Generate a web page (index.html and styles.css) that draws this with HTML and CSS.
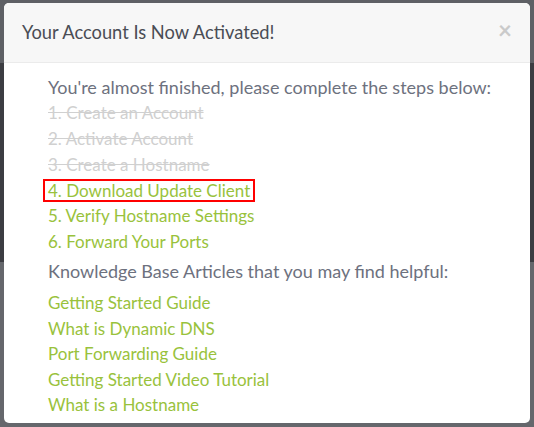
FILE: index.html
```html
<!DOCTYPE html>
<html>
<head>
<meta charset="utf-8">
<link rel="stylesheet" href="styles.css">
</head>
<body>
<div class="modal">
  <div class="modal-header">
    <h4 class="title">Your Account Is Now Activated!</h4>
    <span class="close">&times;</span>
  </div>
  <div class="modal-body">
    <p class="lead">You're almost finished, please complete the steps below:</p>
    <ul class="steps">
      <li class="done">1. Create an Account</li>
      <li class="done">2. Activate Account</li>
      <li class="done">3. Create a Hostname</li>
      <li class="cur"><a class="current">4. Download Update Client</a></li>
      <li><a>5. Verify Hostname Settings</a></li>
      <li><a>6. Forward Your Ports</a></li>
    </ul>
    <p class="lead kb">Knowledge Base Articles that you may find helpful:</p>
    <ul class="links">
      <li><a>Getting Started Guide</a></li>
      <li><a>What is Dynamic DNS</a></li>
      <li><a>Port Forwarding Guide</a></li>
      <li><a>Getting Started Video Tutorial</a></li>
      <li><a>What is a Hostname</a></li>
    </ul>
  </div>
</div>
</body>
</html>
```
FILE: styles.css
```css
html, body {
  margin: 0;
  padding: 0;
}
body {
  width: 534px;
  height: 427px;
  overflow: hidden;
  background: linear-gradient(to bottom, #5e6065 0, #5e6065 63px, #3c3d42 63px, #3c3d42 262px, #65676c 262px, #65676c 100%);
  font-family: Lato, "Open Sans", sans-serif;
  padding: 3px 4px 0 4px;
  box-sizing: border-box;
}
.modal {
  width: 526px;
  height: 420px;
  background: #fff;
  border-radius: 5px;
  overflow: hidden;
}
.modal-header {
  height: 59px;
  background: #f7f7f7;
  border-bottom: 1px solid #ebebeb;
  display: flex;
  align-items: center;
  justify-content: space-between;
  padding: 0 18px 0 18px;
}
.title {
  margin: 0;
  font-size: 18.3px;
  font-weight: 400;
  color: #4a4d55;
  padding-bottom: 2px;
}
.close {
  color: #cacaca;
  font-size: 24px;
  font-weight: 700;
  line-height: 1;
  margin-bottom: 6px;
}
.modal-body {
  padding: 11px 0 0 44px;
  font-size: 17px;
  line-height: 26px;
}
.lead {
  margin: 0;
  font-size: 18px;
  color: #6d717e;
}
ul {
  list-style: none;
  margin: 0;
  padding: 0;
}
.steps li {
  height: 26px;
}
.steps li.cur {
  height: 25px;
}
.done {
  color: #d0d0d0;
  text-decoration: line-through;
}
a {
  color: #99c23c;
}
.current {
  display: inline-block;
  border: 2px solid #f00;
  line-height: 19px;
  padding: 0 3px;
  margin: 0 0 0 -5px;
}
.kb {
  margin-top: 3px;
}
.links {
  margin-top: 6px;
}
.links li {
  height: 25.5px;
}
```
